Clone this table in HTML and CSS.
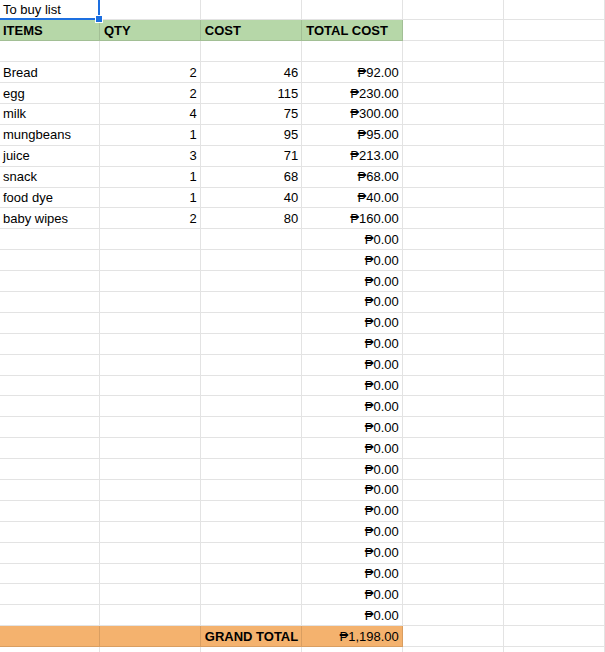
FILE: index.html
```html
<!DOCTYPE html>
<html>
<head>
<meta charset="utf-8">
<link rel="stylesheet" href="styles.css">
</head>
<body>
<div class="sheet">
  <div class="row first"><div class="c sel">To buy list<span class="handle"></span></div><div class="c"></div><div class="c"></div><div class="c"></div><div class="c"></div><div class="c"></div></div>
  <div class="row"><div class="c b green">ITEMS</div><div class="c b green">QTY</div><div class="c b green">COST</div><div class="c b green">TOTAL COST</div><div class="c"></div><div class="c"></div></div>
  <div class="row"><div class="c"></div><div class="c"></div><div class="c"></div><div class="c"></div><div class="c"></div><div class="c"></div></div>
  <div class="row"><div class="c">Bread</div><div class="c r">2</div><div class="c r">46</div><div class="c r">₱92.00</div><div class="c"></div><div class="c"></div></div>
  <div class="row"><div class="c">egg</div><div class="c r">2</div><div class="c r">115</div><div class="c r">₱230.00</div><div class="c"></div><div class="c"></div></div>
  <div class="row"><div class="c">milk</div><div class="c r">4</div><div class="c r">75</div><div class="c r">₱300.00</div><div class="c"></div><div class="c"></div></div>
  <div class="row"><div class="c">mungbeans</div><div class="c r">1</div><div class="c r">95</div><div class="c r">₱95.00</div><div class="c"></div><div class="c"></div></div>
  <div class="row"><div class="c">juice</div><div class="c r">3</div><div class="c r">71</div><div class="c r">₱213.00</div><div class="c"></div><div class="c"></div></div>
  <div class="row"><div class="c">snack</div><div class="c r">1</div><div class="c r">68</div><div class="c r">₱68.00</div><div class="c"></div><div class="c"></div></div>
  <div class="row"><div class="c">food dye</div><div class="c r">1</div><div class="c r">40</div><div class="c r">₱40.00</div><div class="c"></div><div class="c"></div></div>
  <div class="row"><div class="c">baby wipes</div><div class="c r">2</div><div class="c r">80</div><div class="c r">₱160.00</div><div class="c"></div><div class="c"></div></div>
  <div class="row"><div class="c"></div><div class="c"></div><div class="c"></div><div class="c r">₱0.00</div><div class="c"></div><div class="c"></div></div>
  <div class="row"><div class="c"></div><div class="c"></div><div class="c"></div><div class="c r">₱0.00</div><div class="c"></div><div class="c"></div></div>
  <div class="row"><div class="c"></div><div class="c"></div><div class="c"></div><div class="c r">₱0.00</div><div class="c"></div><div class="c"></div></div>
  <div class="row"><div class="c"></div><div class="c"></div><div class="c"></div><div class="c r">₱0.00</div><div class="c"></div><div class="c"></div></div>
  <div class="row"><div class="c"></div><div class="c"></div><div class="c"></div><div class="c r">₱0.00</div><div class="c"></div><div class="c"></div></div>
  <div class="row"><div class="c"></div><div class="c"></div><div class="c"></div><div class="c r">₱0.00</div><div class="c"></div><div class="c"></div></div>
  <div class="row"><div class="c"></div><div class="c"></div><div class="c"></div><div class="c r">₱0.00</div><div class="c"></div><div class="c"></div></div>
  <div class="row"><div class="c"></div><div class="c"></div><div class="c"></div><div class="c r">₱0.00</div><div class="c"></div><div class="c"></div></div>
  <div class="row"><div class="c"></div><div class="c"></div><div class="c"></div><div class="c r">₱0.00</div><div class="c"></div><div class="c"></div></div>
  <div class="row"><div class="c"></div><div class="c"></div><div class="c"></div><div class="c r">₱0.00</div><div class="c"></div><div class="c"></div></div>
  <div class="row"><div class="c"></div><div class="c"></div><div class="c"></div><div class="c r">₱0.00</div><div class="c"></div><div class="c"></div></div>
  <div class="row"><div class="c"></div><div class="c"></div><div class="c"></div><div class="c r">₱0.00</div><div class="c"></div><div class="c"></div></div>
  <div class="row"><div class="c"></div><div class="c"></div><div class="c"></div><div class="c r">₱0.00</div><div class="c"></div><div class="c"></div></div>
  <div class="row"><div class="c"></div><div class="c"></div><div class="c"></div><div class="c r">₱0.00</div><div class="c"></div><div class="c"></div></div>
  <div class="row"><div class="c"></div><div class="c"></div><div class="c"></div><div class="c r">₱0.00</div><div class="c"></div><div class="c"></div></div>
  <div class="row"><div class="c"></div><div class="c"></div><div class="c"></div><div class="c r">₱0.00</div><div class="c"></div><div class="c"></div></div>
  <div class="row"><div class="c"></div><div class="c"></div><div class="c"></div><div class="c r">₱0.00</div><div class="c"></div><div class="c"></div></div>
  <div class="row"><div class="c"></div><div class="c"></div><div class="c"></div><div class="c r">₱0.00</div><div class="c"></div><div class="c"></div></div>
  <div class="row"><div class="c"></div><div class="c"></div><div class="c"></div><div class="c r">₱0.00</div><div class="c"></div><div class="c"></div></div>
  <div class="row"><div class="c orange"></div><div class="c orange"></div><div class="c b orange">GRAND TOTAL</div><div class="c r orange">₱1,198.00</div><div class="c"></div><div class="c"></div></div>
  <div class="row"><div class="c"></div><div class="c"></div><div class="c"></div><div class="c"></div><div class="c"></div><div class="c"></div></div>
</div>
</body>
</html>
```

FILE: styles.css
```css
html, body {
  margin: 0;
  padding: 0;
  background: #fff;
  overflow: hidden;
}
.sheet {
  width: 606px;
  margin-left: -1px;
  margin-top: -1px;
  font-family: "Liberation Sans", Arial, "DejaVu Sans", sans-serif;
  font-size: 13px;
  color: #000;
}
.row {
  display: grid;
  grid-template-columns: 100.9px 100.9px 101.5px 100.5px 101px 101px;
  height: 20.9px;
}
.row.first {
  height: 21.4px;
}
.c {
  box-sizing: border-box;
  border-right: 1px solid rgba(0, 0, 0, 0.11);
  border-bottom: 1px solid rgba(0, 0, 0, 0.11);
  padding: 0 3px 0 4px;
  display: flex;
  align-items: center;
  white-space: nowrap;
  overflow: visible;
  position: relative;
}
.r {
  justify-content: flex-end;
}
.b {
  font-weight: bold;
}
.green {
  background: #b6d7a8;
}
.orange {
  background: #f4b26e;
}
.sel {
  border-right: 2px solid #1d6fe0;
  border-bottom: 2px solid #1d6fe0;
  padding-top: 1px;
}
.handle {
  position: absolute;
  right: -5px;
  bottom: -5px;
  width: 6px;
  height: 6px;
  background: #1d6fe0;
  border: 1px solid #fff;
  z-index: 2;
}
```
